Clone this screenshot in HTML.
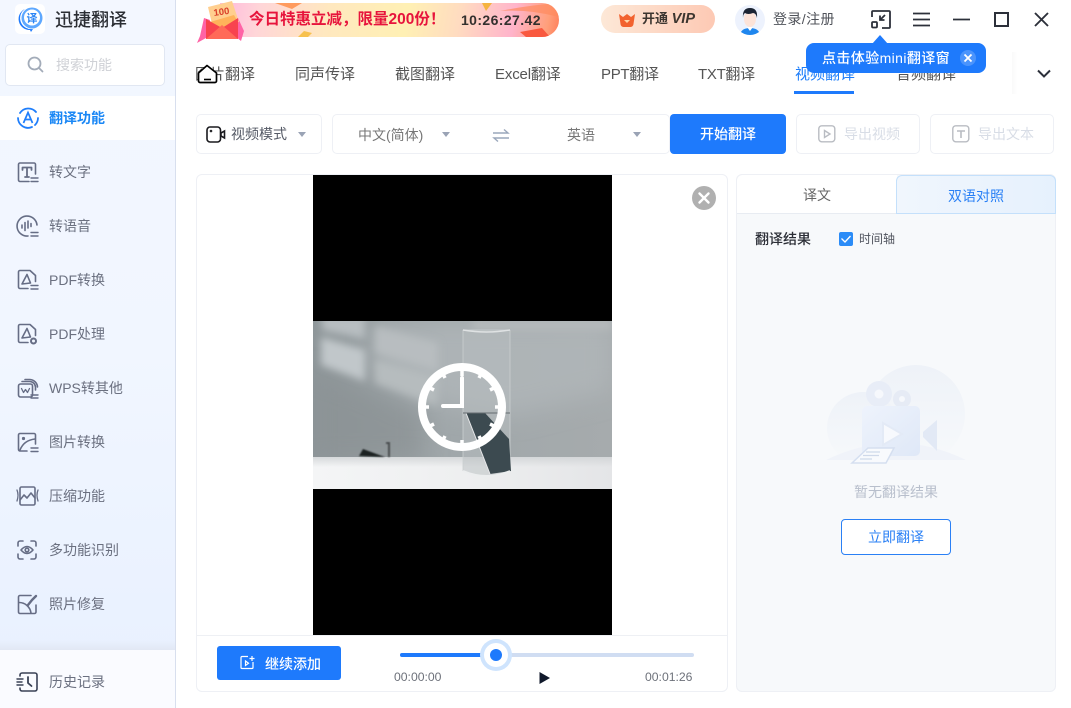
<!DOCTYPE html>
<html><head><meta charset="utf-8">
<style>
html,body{margin:0;padding:0;width:1071px;height:708px;overflow:hidden;background:#fff}
body{font-family:"Liberation Sans","Noto Sans CJK SC",sans-serif;position:relative;color:#555}
.a{position:absolute;white-space:nowrap}
svg{position:absolute;overflow:visible}
.side{left:0;top:0;width:175px;height:708px;background:linear-gradient(180deg,#f3f7ff 0%,#f1f6ff 50%,#e9f1ff 92%);border-right:1px solid #d8dfee}
.mi{left:49px;font-size:14px;line-height:20px;color:#6b7080}
.tab{top:65px;font-size:15px;line-height:20px;color:#555}
.ic{fill:none;stroke:#666d85;stroke-width:1.6;stroke-linecap:round;stroke-linejoin:round}
.box{background:#fff;border:1px solid #eef0f5;border-radius:5px;box-sizing:border-box}
</style></head><body>

<div class="a side"></div>
<!-- logo -->
<div class="a" style="left:15px;top:4px;width:30px;height:30px;background:#fff;border-radius:5px"></div>
<svg style="left:15px;top:4px" width="30" height="30" viewBox="0 0 30 30">
<path d="M10 5A11 11 0 0 0 15 26L16 28 18 25A11 11 0 0 1 10 5Z" fill="#1f7afc"/>
<circle cx="17" cy="14" r="10.5" fill="#5ea8ff"/><circle cx="17" cy="13.5" r="8" fill="#fff"/>
<text x="17" y="18" font-size="11" font-weight="bold" fill="#2b85f5" text-anchor="middle" font-family="Noto Sans CJK SC">译</text></svg>
<div class="a" style="left:55px;top:7px;font-size:18px;line-height:26px;color:#2a2d33;font-weight:500">迅捷翻译</div>
<div class="a box" style="left:5px;top:44px;width:160px;height:42px;border:1px solid #e1e7f2"></div>
<svg style="left:27px;top:56px" width="17" height="17" viewBox="0 0 17 17"><circle cx="7.5" cy="7.5" r="6" fill="none" stroke="#a3acb9" stroke-width="1.8"/><path d="M12 12l3.500 3.500" stroke="#a3acb9" stroke-width="1.8" stroke-linecap="round"/></svg>
<div class="a" style="left:56px;top:55px;font-size:14px;line-height:20px;color:#cfd1d6">搜索功能</div>

<div class="a" style="left:0;top:96px;width:175px;height:44px;background:#fff"></div>
<svg style="left:16px;top:106px" width="24" height="24" viewBox="0 0 24 24"><path d="M4 7A10 10 0 0 1 20 6M22 12A10 10 0 0 1 19 19M16 21A10 10 0 0 1 2 12" fill="none" stroke="#1f7efb" stroke-width="1.8" stroke-linecap="round"/><path d="M7.500 17L12 6.500 16.500 17M9.200 13.500h5.600" fill="none" stroke="#1f7efb" stroke-width="1.700"/></svg>
<div class="a mi" style="top:108px;color:#1a87f5;font-weight:bold">翻译功能</div>

<svg class="ic" style="left:17px;top:162px" width="22" height="22" viewBox="0 0 22 22"><path d="M12 19.500H3a1.500 1.500 0 0 1-1.500-1.500V2.500A1.500 1.500 0 0 1 3 1h14a1.500 1.500 0 0 1 1.500 1.500V12"/><path d="M5.500 8V5.500h9V8M10 5.500V15M8 15h4" stroke-width="1.800"/><path d="M14 16h7M14 19.500h7" stroke-width="1.400"/></svg>
<div class="a mi" style="top:162px">转文字</div>

<svg class="ic" style="left:16px;top:215px" width="23" height="23" viewBox="0 0 23 23"><path d="M21 10A10 10 0 1 0 12 21"/><path d="M6 10v3M9 7.500v8M12 6v7M15 8.500v3"/><path d="M15 17.500h7M15 21h7" stroke-width="1.400"/></svg>
<div class="a mi" style="top:216px">转语音</div>

<svg class="ic" style="left:17px;top:269px" width="22" height="22" viewBox="0 0 22 22"><path d="M11 19.500H3A1.500 1.500 0 0 1 1.500 18V3A1.500 1.500 0 0 1 3 1.500h10l5.500 5v6"/><path d="M5 15L10 5.500l3.500 8.500-8.500 1z"/><path d="M14 16.500h7M14 20h7" stroke-width="1.400"/></svg>
<div class="a mi" style="top:270px">PDF转换</div>

<svg class="ic" style="left:17px;top:323px" width="22" height="22" viewBox="0 0 22 22"><path d="M11 19.500H3A1.500 1.500 0 0 1 1.500 18V3A1.500 1.500 0 0 1 3 1.500h10l5.500 5v6"/><path d="M5 15L10 5.500l3.500 8.500-8.500 1z"/><circle cx="16.500" cy="18" r="2.500" stroke-width="2"/></svg>
<div class="a mi" style="top:324px">PDF处理</div>

<svg class="ic" style="left:17px;top:378px" width="22" height="22" viewBox="0 0 22 22"><rect x="1.500" y="6" width="14" height="13" rx="2"/><path d="M5 3.500h8A6 6 0 0 1 18.500 9v3M8 1.500h5A8 8 0 0 1 20.500 9"/><path d="M4.500 10.500l2 4 2-3 2 3 2-4" stroke-width="1.300"/><path d="M14 17h7M14 20h7" stroke-width="1.400"/></svg>
<div class="a mi" style="top:378px">WPS转其他</div>

<svg class="ic" style="left:17px;top:432px" width="22" height="22" viewBox="0 0 22 22"><path d="M10 19H3A1.500 1.500 0 0 1 1.500 17.500V3A1.500 1.500 0 0 1 3 1.500h14A1.500 1.500 0 0 1 18.500 3v9"/><circle cx="6.500" cy="6.500" r=".8"/><path d="M3 18C5 13 9 8 18 7"/><path d="M14 16h7M14 19.500h7" stroke-width="1.400"/></svg>
<div class="a mi" style="top:432px">图片转换</div>

<svg class="ic" style="left:16px;top:486px" width="23" height="20" viewBox="0 0 23 20"><rect x="4" y="1" width="15" height="18" rx="1.500"/><path d="M4 14l4-5 3 3 4-5 4 5"/><path d="M1 4q2 5 0 11M22 4q-2 5 0 11" stroke-width="1.300"/></svg>
<div class="a mi" style="top:486px">压缩功能</div>

<svg class="ic" style="left:17px;top:540px" width="20" height="20" viewBox="0 0 20 20"><path d="M1 6V3a2 2 0 0 1 2-2h3M14 1h3a2 2 0 0 1 2 2v3M19 14v3a2 2 0 0 1-2 2h-3M6 19H3a2 2 0 0 1-2-2v-3"/><path d="M4 10q6-7 12 0q-6 7-12 0z"/><circle cx="10" cy="10" r="1.800"/></svg>
<div class="a mi" style="top:540px">多功能识别</div>

<svg class="ic" style="left:17px;top:594px" width="21" height="21" viewBox="0 0 21 21"><path d="M19 11v7a1.500 1.500 0 0 1-1.500 1.500H3A1.500 1.500 0 0 1 1.500 18V3A1.500 1.500 0 0 1 3 1.500h11"/><path d="M2 8.500A12 12 0 0 1 14 19"/><path d="M11 11l4-5 4-4" stroke-width="2.400"/></svg>
<div class="a mi" style="top:594px">照片修复</div>

<div class="a" style="left:0;top:640px;width:175px;height:10px;background:linear-gradient(180deg,rgba(225,232,245,0),#e2e8f4)"></div>
<div class="a" style="left:0;top:650px;width:175px;height:58px;background:#fafbff"></div>
<svg class="ic" style="left:16px;top:672px;stroke:#3a4256" width="22" height="20" viewBox="0 0 22 20"><path d="M4 4V3a2 2 0 0 1 2-2h13a2 2 0 0 1 2 2v14a2 2 0 0 1-2 2H6a2 2 0 0 1-2-2v-1"/><path d="M1 7h6M1 10h5M1 13h6" stroke-width="1.400"/><path d="M12 5v6l3.500 3" stroke-width="1.800"/></svg>
<div class="a mi" style="top:672px">历史记录</div>

<!-- promo banner -->
<div class="a" style="left:220px;top:3px;width:339px;height:34px;border-radius:0 17px 17px 0;overflow:hidden;background:linear-gradient(100deg,#ffb8dd 0%,#ffd6d8 12%,#ffe8bf 32%,#fff0b4 55%,#ffdcc0 70%,#ffb4cb 86%,#ff9f7a 96%,#ff7d58 100%)">
<svg style="left:0;top:0;overflow:hidden" width="339" height="34" viewBox="0 0 339 34">
<path d="M55 0H82L72 6Z" fill="#ff9b5e"/><path d="M262 0H272L266 8Z" fill="#f5b33f"/>
<path d="M280 8Q310 2 339 0V14Q310 6 280 8Z" fill="#ff8a5e" opacity=".7"/>
<path d="M300 29L322 25 330 34H306Z" fill="#f9593f"/>
<path d="M78 34L84 28 92 30 88 34Z" fill="#f7c14e"/></svg></div>
<svg style="left:196px;top:0" width="60" height="44" viewBox="0 0 60 44">
<path d="M8 18L4 36 1 43 10 38 14 20Z" fill="#ff63a6"/>
<path d="M42 18L48 31 45 41 39 36Z" fill="#ff63a6"/>
<path d="M12 7L36 1 43 22 17 28Z" fill="#ffcf8f"/>
<path d="M14 22L38 15 42 22 20 30Z" fill="#ffb25a"/>
<path d="M10 19L26 28 42 18V39H10Z" fill="#f8434e"/>
<path d="M10 39L26 25 42 39Z" fill="#ff6a58"/>
<text x="18" y="16" font-size="9.500" font-weight="bold" fill="#d9402a" transform="rotate(-8 18 16)" font-family="Liberation Sans">100</text></svg>
<div class="a" style="left:249px;top:8px;font-size:15.500px;line-height:24px;color:#e7143c;font-weight:bold">今日特惠立减，限量200份！</div>
<div class="a" style="left:461px;top:9px;font-size:14px;line-height:22px;color:#33302e;font-weight:bold;letter-spacing:.4px">10:26:27.42</div>

<!-- VIP -->
<div class="a" style="left:601px;top:5px;width:114px;height:28px;border-radius:14px;background:linear-gradient(90deg,#fde8d7,#fdc9b4)"></div>
<svg style="left:618px;top:13px" width="18" height="14" viewBox="0 0 18 14"><path d="M1 1l4 3 4-3 4 3 4-3-1.500 10a3 3 0 0 1-3 3H5.500a3 3 0 0 1-3-3z" fill="#f2622e"/><path d="M6 7h6L9 10z" fill="#ffd6a8"/></svg>
<div class="a" style="left:642px;top:9px;font-size:13px;line-height:20px;color:#3d3630;font-weight:bold">开通 <span style="font-style:italic;font-size:14.500px">VIP</span></div>

<!-- user -->
<svg style="left:735px;top:5px" width="30" height="30" viewBox="0 0 30 30"><defs><clipPath id="c"><circle cx="15" cy="15" r="15"/></clipPath></defs><g clip-path="url(#c)"><rect width="30" height="30" fill="#edf2fd"/><path d="M5 30q1-7 10-7t10 7z" fill="#1f86ee"/><path d="M12 22h6l-3 4z" fill="#fff"/><ellipse cx="15" cy="14" rx="6" ry="8" fill="#fde3d8"/><path d="M8 13Q7 3 15 3t7 10q-1-5-4-5-5 2-8 0-2 1-2 5z" fill="#1c2433"/></g></svg>
<div class="a" style="left:773px;top:9px;font-size:14px;line-height:20px;color:#50535a;letter-spacing:.4px">登录/注册</div>

<!-- window controls -->
<svg style="left:871px;top:10px" width="20" height="19" viewBox="0 0 20 19" fill="none" stroke="#2c303a" stroke-width="1.800"><path d="M1 7V2a1 1 0 0 1 1-1h16a1 1 0 0 1 1 1v15a1 1 0 0 1-1 1H11"/><rect x="1" y="12" width="5" height="5.500" rx="1"/><path d="M14 5l-5 5M9 5.500V10h4.500"/></svg>
<svg style="left:913px;top:12px" width="17" height="15" viewBox="0 0 17 15" stroke="#2c303a" stroke-width="1.700"><path d="M0 1.500h17M0 7.500h17M0 13.500h17"/></svg>
<svg style="left:953px;top:18px" width="17" height="3" stroke="#2c303a" stroke-width="1.800"><path d="M0 1.500h17"/></svg>
<svg style="left:994px;top:12px" width="15" height="15" fill="none" stroke="#2c303a" stroke-width="2"><rect x="1" y="1" width="13" height="13"/></svg>
<svg style="left:1034px;top:12px" width="15" height="15" stroke="#2c303a" stroke-width="1.900"><path d="M1 1l13 13M14 1L1 14"/></svg>

<!-- tabs -->
<div class="a tab" style="left:195px;width:60px;overflow:hidden;text-align:right">图片翻译</div>
<svg style="left:197px;top:64px" width="21" height="20" viewBox="0 0 21 20"><path d="M1.500 9L10 1.500 19.500 9V17a1.500 1.500 0 0 1-1.500 1.500H3A1.500 1.500 0 0 1 1.500 17Z" fill="#fff" stroke="#000" stroke-width="1.700" stroke-linejoin="round"/><path d="M7 15.500h7" stroke="#000" stroke-width="1.600"/></svg>
<div class="a tab" style="left:295px">同声传译</div>
<div class="a tab" style="left:395px">截图翻译</div>
<div class="a tab" style="left:495px;letter-spacing:-.15px">Excel翻译</div>
<div class="a tab" style="left:601px;letter-spacing:-.3px">PPT翻译</div>
<div class="a tab" style="left:698px;letter-spacing:-.3px">TXT翻译</div>
<div class="a tab" style="left:795px;color:#1e7efa">视频翻译</div>
<div class="a" style="left:794px;top:91px;width:60px;height:3px;background:#1e7afc"></div>
<div class="a tab" style="left:896px">音频翻译</div>
<div class="a" style="left:1012px;top:52px;width:59px;height:42px;background:linear-gradient(90deg,#fafafa,#fff 10%)"></div>
<svg style="left:1037px;top:69px" width="14" height="10" fill="none" stroke="#2c303a" stroke-width="2"><path d="M1 1.500L7 7.500 13 1.500"/></svg>

<!-- tooltip -->
<div class="a" style="left:806px;top:43px;width:180px;height:30px;background:#1e7afc;border-radius:8px"></div>
<svg style="left:872px;top:35px" width="16" height="9"><path d="M0 9L8 0 16 9Z" fill="#1e7afc"/></svg>
<div class="a" style="left:822px;top:48px;font-size:14px;line-height:20px;color:#fff;font-weight:500;letter-spacing:.4px">点击体验mini翻译窗</div>
<div class="a" style="left:960px;top:50px;width:16px;height:16px;border-radius:50%;background:#4b94fc"></div>
<svg style="left:964px;top:54px" width="8" height="8" stroke="#fff" stroke-width="1.800"><path d="M.5.5l7 7M7.500.5l-7 7"/></svg>

<!-- toolbar -->
<div class="a box" style="left:196px;top:114px;width:126px;height:40px"></div>
<svg style="left:206px;top:126px" width="20" height="17" viewBox="0 0 20 17" fill="none" stroke="#1a1a1e" stroke-width="1.600"><rect x="1" y="1" width="13.500" height="15" rx="3"/><path d="M15 7l3.500-2v7L15 10z"/><circle cx="5" cy="5" r=".5"/></svg>
<div class="a" style="left:231px;top:124px;font-size:14px;line-height:20px;color:#555a66">视频模式</div>
<svg style="left:298px;top:132px" width="8" height="5"><path d="M0 0h8L4 5z" fill="#9aa3b5"/></svg>

<div class="a box" style="left:332px;top:114px;width:338px;height:40px"></div>
<div class="a" style="left:358px;top:125px;font-size:14px;line-height:20px;color:#777">中文(简体)</div>
<svg style="left:442px;top:132px" width="8" height="5"><path d="M0 0h8L4 5z" fill="#9aa3b5"/></svg>
<svg style="left:493px;top:129px" width="16" height="13" fill="none" stroke="#9aa7bb" stroke-width="1.400"><path d="M0 4h15L11 .5M16 9H1l4 3.500"/></svg>
<div class="a" style="left:567px;top:125px;font-size:14px;line-height:20px;color:#777">英语</div>
<svg style="left:633px;top:132px" width="8" height="5"><path d="M0 0h8L4 5z" fill="#9aa3b5"/></svg>

<div class="a" style="left:670px;top:114px;width:116px;height:40px;background:#1e7afc;border-radius:4px;color:#fff;font-size:14px;line-height:41px;text-align:center;font-weight:500">开始翻译</div>

<div class="a box" style="left:796px;top:114px;width:124px;height:40px"></div>
<svg style="left:818px;top:125px" width="18" height="18" fill="none" stroke="#b9bcc2" stroke-width="1.400"><rect x=".8" y=".8" width="16" height="16" rx="3"/><path d="M6.500 5.500l5.500 3.500-5.500 3.500z"/></svg>
<div class="a" style="left:844px;top:124px;font-size:14px;line-height:20px;color:#d8dde6">导出视频</div>
<div class="a box" style="left:930px;top:114px;width:124px;height:40px"></div>
<svg style="left:952px;top:125px" width="18" height="18" fill="none" stroke="#b9bcc2" stroke-width="1.400"><rect x=".8" y=".8" width="16" height="16" rx="3"/><path d="M5 6h8M9 6v7" stroke-width="1.600"/></svg>
<div class="a" style="left:978px;top:124px;font-size:14px;line-height:20px;color:#d8dde6">导出文本</div>

<!-- video panel -->
<div class="a box" style="left:196px;top:174px;width:532px;height:518px;border-radius:6px"></div>
<div class="a" style="left:313px;top:175px;width:299px;height:460px;background:#000"></div>
<svg style="left:313px;top:321px;overflow:hidden" width="299" height="168" viewBox="0 0 299 168">
<defs>
<linearGradient id="bg" x1="0" y1="0" x2="1" y2="0"><stop offset="0" stop-color="#8e9699"/><stop offset=".45" stop-color="#a0a7aa"/><stop offset="1" stop-color="#a6abad"/></linearGradient>
<linearGradient id="tb" x1="0" y1="0" x2="1" y2="0"><stop offset="0" stop-color="#f4f5f6"/><stop offset=".5" stop-color="#eeeff0"/><stop offset="1" stop-color="#e4e5e7"/></linearGradient>
<linearGradient id="ts" x1="0" y1="0" x2="0" y2="1"><stop offset="0" stop-color="#cfd2d4" stop-opacity=".8"/><stop offset="1" stop-color="#cfd2d4" stop-opacity="0"/></linearGradient>
<filter id="b" x="-30%" y="-30%" width="160%" height="160%"><feGaussianBlur stdDeviation="4"/></filter><filter id="b3" x="-30%" y="-30%" width="160%" height="160%"><feGaussianBlur stdDeviation="12"/></filter><filter id="b2"><feGaussianBlur stdDeviation=".7"/></filter>
</defs>
<rect width="299" height="168" fill="url(#bg)"/>
<g filter="url(#b3)"><path d="M60 0H299V70L200 95 130 85 60 50Z" fill="#b2b8ba" opacity=".7"/><path d="M0 50L110 90V140H0Z" fill="#8a9194" opacity=".7"/></g>
<g filter="url(#b)">
<path d="M9 -5H52V18L9 9Z" fill="#b8bec1"/>
<path d="M8 16L52 29V60L8 44Z" fill="#c1c7ca"/>
<path d="M62 5L125 22V50L62 32Z" fill="#b8bdc0"/>
<path d="M62 38L125 56V85L62 62Z" fill="#b6bcbe"/>
<path d="M160 0H299V8L160 8Z" fill="#b8bcbd"/>
</g>
<rect y="136" width="299" height="32" fill="url(#tb)"/>
<rect y="136" width="299" height="10" fill="url(#ts)"/>
<g filter="url(#b2)"><path d="M46 135L50 128 72 136Z" fill="#1f2224"/><path d="M73 122H77M76 122V136" stroke="#4a4d50" stroke-width="2"/></g>
<path d="M150 9H197V150Q174 160 150 150Z" fill="#b8bec0" opacity=".5"/>
<path d="M150 9H197M150 9V150M197 9V150" stroke="#c9ced0" stroke-width="1" fill="none" opacity=".8"/>
<path d="M150 9Q174 13 197 9" stroke="#dfe2e3" stroke-width="1.500" fill="none"/>
<path d="M153 92H172L196 118 198 150 177 153Z" fill="#3c4a50"/>
<path d="M153 92L177 153" stroke="#e8e8ea" stroke-width="1"/>
<path d="M150 92H197" stroke="#656c70"/>
<path d="M150 150Q174 160 197 150" stroke="#eceeef" stroke-width="2" fill="none"/>
<g fill="none" stroke="#fff"><circle cx="149" cy="86" r="40" stroke-width="8"/><path d="M149 57V85H130" stroke-width="4" stroke-linecap="round"/>
<path d="M149 46v9M169 51l-3 6M183 66l-6 3M189 86h-7M183 106l-6-3M169 121l-3-6M149 126v-7M129 121l3-6M115 106l6-3M109 86h7M115 66l6 3M129 51l3 6" stroke-width="3.500"/></g>
</svg>
<svg style="left:692px;top:186px" width="24" height="24"><circle cx="12" cy="12" r="12" fill="#b0b0b0"/><path d="M7.500 7.500l9 9M16.500 7.500l-9 9" stroke="#fff" stroke-width="2.400" stroke-linecap="round"/></svg>

<div class="a" style="left:197px;top:635px;width:530px;height:1px;background:#eef0f4"></div>
<div class="a" style="left:217px;top:646px;width:124px;height:34px;background:#1e7afc;border-radius:3px"></div>
<svg style="left:240px;top:655px" width="15" height="15" fill="none" stroke="#fff" stroke-width="1.200"><path d="M8 1.500H2A1 1 0 0 0 1 2.500v10a1 1 0 0 0 1 1h10a1 1 0 0 0 1-1V7"/><path d="M5.500 6v4.500l3-2.200zM12 1v5M9.500 3.500h5"/></svg>
<div class="a" style="left:265px;top:654px;font-size:14px;line-height:20px;color:#fff;font-weight:500">继续添加</div>

<div class="a" style="left:400px;top:653px;width:294px;height:4px;border-radius:2px;background:#d0ddf2"></div>
<div class="a" style="left:400px;top:653px;width:95px;height:4px;border-radius:2px;background:#1e7afc"></div>
<div class="a" style="left:480px;top:639px;width:32px;height:32px;border-radius:50%;background:#cfe4fd"></div>
<div class="a" style="left:484px;top:643px;width:24px;height:24px;border-radius:50%;background:#fff"></div>
<div class="a" style="left:490px;top:649px;width:12px;height:12px;border-radius:50%;background:#1e7afc"></div>
<div class="a" style="left:394px;top:668px;font-size:12.200px;line-height:18px;color:#6d717a">00:00:00</div>
<svg style="left:539px;top:672px" width="11" height="12"><path d="M.5 0L11 6 .5 12z" fill="#10192b"/></svg>
<div class="a" style="left:645px;top:668px;font-size:12.200px;line-height:18px;color:#6d717a">00:01:26</div>

<!-- right panel -->
<div class="a box" style="left:736px;top:174px;width:320px;height:518px;border-radius:6px;background:#f7f9fb"></div>
<div class="a" style="left:737px;top:175px;width:160px;height:38px;background:#fff;border-radius:6px 0 0 0;border-bottom:1px solid #e8ecf2;color:#666;font-size:14px;line-height:41px;text-align:center">译文</div>
<div class="a" style="left:896px;top:175px;width:158px;height:37px;background:linear-gradient(90deg,#f0f6fd,#e6f1fd);border:1px solid #c4e0fb;border-radius:6px 6px 0 0;color:#2a80f5;font-size:14px;line-height:40px;text-align:center">双语对照</div>
<div class="a" style="left:755px;top:229px;font-size:14px;line-height:20px;color:#2b2e36;font-weight:500">翻译结果</div>
<div class="a" style="left:839px;top:232px;width:14px;height:14px;background:#2b8cf7;border-radius:2px"></div>
<svg style="left:841px;top:235px" width="10" height="8" fill="none" stroke="#fff" stroke-width="1.300"><path d="M.5 3.500L4 7 9.500 1"/></svg>
<div class="a" style="left:859px;top:230px;font-size:12px;line-height:18px;color:#50545e">时间轴</div>

<svg style="left:826px;top:364px" width="142" height="105" viewBox="0 0 142 105">
<defs><linearGradient id="ci" x1="0" y1="0" x2="0" y2="1"><stop offset="0" stop-color="#eef2f8"/><stop offset="1" stop-color="#f7f9fb"/></linearGradient>
<linearGradient id="cam" x1="0" y1="0" x2="1" y2="1"><stop offset="0" stop-color="#eef3fc"/><stop offset="1" stop-color="#dfe8f7"/></linearGradient></defs>
<circle cx="90" cy="50" r="49" fill="url(#ci)"/><circle cx="37" cy="64" r="36" fill="url(#ci)"/>
<path d="M0 96Q70 62 140 96Z" fill="#f0f3f9"/>
<circle cx="53" cy="30" r="13" fill="#e8edf7"/><circle cx="53" cy="30" r="4.500" fill="#f6f8fc"/>
<circle cx="76" cy="35" r="9" fill="#e6ebf5"/><circle cx="76" cy="35" r="3" fill="#f6f8fc"/>
<rect x="36" y="42" width="58" height="50" rx="5" fill="url(#cam)"/>
<path d="M57 59L76 70 57 81Z" fill="#f7f9fd" stroke="#e3eaf6" stroke-width="2"/>
<path d="M97 73V68L111 56V87Z" fill="#e2e9f5"/>
<path d="M42 84H68L60 99 26 99Z" fill="#f8fafd" stroke="#d5dff0" stroke-width="1.500"/>
<path d="M40 88h14M37 91.500h16M34 95h12" stroke="#cfd9ea" stroke-width="1.300"/>
</svg>
<div class="a" style="left:854px;top:482px;font-size:14px;line-height:20px;color:#b8bfcc">暂无翻译结果</div>
<div class="a" style="left:841px;top:519px;width:110px;height:36px;box-sizing:border-box;background:#fff;border:1px solid #2a80f5;border-radius:4px;color:#2a80f5;font-size:14px;line-height:35px;text-align:center">立即翻译</div>
</body></html>
